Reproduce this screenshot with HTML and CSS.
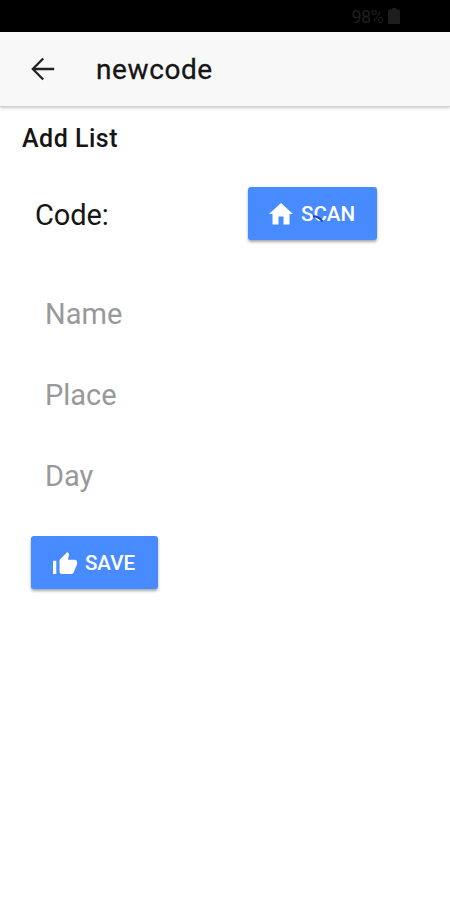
FILE: index.html
```html
<!DOCTYPE html>
<html lang="en">
<head>
<meta charset="utf-8">
<title>newcode</title>
<link rel="stylesheet" href="styles.css">
</head>
<body>
<div class="status"><span>98%</span><svg class="battery" viewBox="0 0 12 16"><path d="M4 0h4v1.500h2q2 0 2 2V16H0V3.500q0-2 2-2h2z"/></svg></div>
<header class="toolbar">
  <svg class="back" viewBox="0 0 24 24"><path d="M23.200 12H1.800M12.200 1.500L1.800 12L12.200 22.500"/></svg>
  <h1>newcode</h1>
</header>
<main>
  <h2>Add List</h2>
  <div class="code-row">
    <span class="label">Code:</span>
    <button class="btn scan">
      <svg viewBox="0 0 24 22"><path d="M12 0L24 11H20.500V21.500H14.500V13.500H9.500V21.500H3.500V11H0z"/></svg><span class="scan-text">SCAN<svg class="spinner" viewBox="0 0 12 8"><path d="M1 1.200Q7 1.200 10.500 6.500"/></svg></span>
    </button>
  </div>
  <div class="fields">
    <div class="field">Name</div>
    <div class="field">Place</div>
    <div class="field">Day</div>
  </div>
  <button class="btn save">
    <svg viewBox="1 1 22 20"><path d="M1 21h3V9H1v12zm22-11c0-1.100-.9-2-2-2h-6.310l.95-4.570.03-.32c0-.41-.17-.79-.44-1.060L14.170 1 7.590 7.590C7.220 7.950 7 8.450 7 9v10c0 1.100.9 2 2 2h9c.83 0 1.540-.5 1.840-1.220l3.020-7.050c.09-.23.14-.47.14-.73v-2z"/></svg><span>SAVE</span>
  </button>
</main>
</body>
</html>
```
FILE: styles.css
```css
* { box-sizing: border-box; }
body {
  margin: 0;
  height: 900px;
  overflow: hidden;
  background: #fff;
  color: #151515;
  font-family: Roboto, sans-serif;
}
h1, h2 { margin: 0; }
.status {
  height: 32px;
  padding: 0 50px 0 0;
  display: flex;
  align-items: center;
  justify-content: flex-end;
  gap: 5px;
  background: #000;
  color: #1e1e1e;
  font-size: 18px;
  letter-spacing: -.6px;
}
.battery { width: 12px; height: 16px; fill: #1e1e1e; }
.toolbar {
  height: 75px;
  padding-left: 31px;
  display: flex;
  align-items: center;
  background: #f8f8f8;
  border-bottom: 1px solid #d2d2d2;
  box-shadow: 0 1px 3px rgba(0, 0, 0, .22);
}
.back {
  width: 24px;
  height: 24px;
  fill: none;
  stroke: #222;
  stroke-width: 2.3;
}
.toolbar h1 {
  margin-left: 41px;
  padding-top: 1px;
  font-size: 28px;
  line-height: 34px;
  font-weight: 400;
  letter-spacing: .6px;
  -webkit-text-stroke: .3px;
}
h2 {
  padding: 15px 0 0 22px;
  font-size: 25px;
  line-height: 34px;
  font-weight: 500;
  letter-spacing: .5px;
}
.code-row {
  height: 53px;
  margin-top: 31px;
  padding-left: 35px;
  display: flex;
  align-items: center;
}
.label {
  width: 213px;
  padding-top: 2px;
  font-size: 29px;
  line-height: 34px;
  letter-spacing: -.1px;
}
.btn {
  height: 53px;
  padding: 0 1px 0 0;
  display: flex;
  align-items: center;
  justify-content: center;
  gap: 8px;
  border: 0;
  border-radius: 3px;
  background: #488aff;
  color: #fff;
  font: 500 20.6px/26px Roboto, sans-serif;
  box-shadow: 0 2px 3px rgba(0, 0, 0, .35);
}
.btn > svg { width: 24px; height: 22px; fill: currentColor; }
.scan { width: 129px; }
.scan-text { position: relative; }
.spinner {
  position: absolute;
  left: 11px;
  top: 14px;
  width: 12px;
  height: 8px;
  fill: none;
  stroke: #153fc0;
  stroke-width: 2;
}
.fields {
  margin-top: 34px;
  padding-left: 45px;
}
.field {
  height: 81px;
  font-size: 29px;
  line-height: 81px;
  color: #999;
}
.save { width: 127px; margin: 19px 0 0 31px; }
```
